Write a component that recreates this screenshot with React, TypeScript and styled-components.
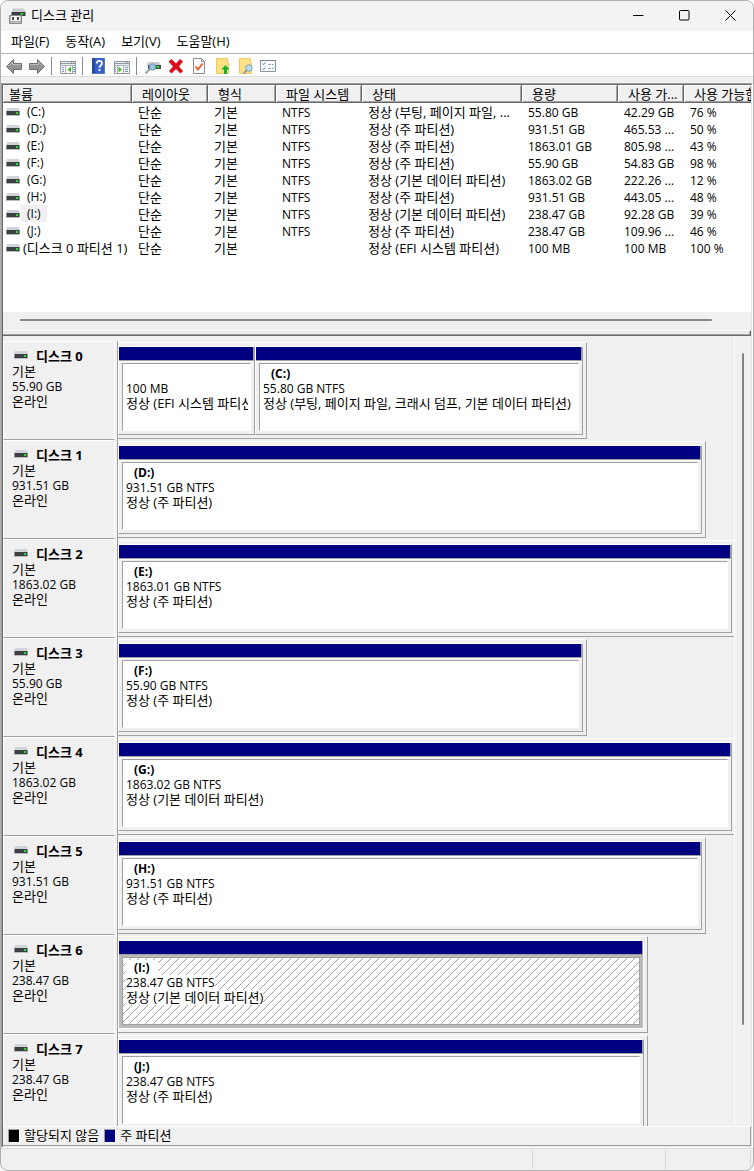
import React from "react";
import styled, { createGlobalStyle, css } from "styled-components";

const GlobalStyle = createGlobalStyle`
  * { box-sizing: border-box; }
  html, body, #root { height: 100%; }
  body {
    margin: 0;
    background: #fafafa;
    color: #000;
    font: 13px/16px "Open Sans", "Noto Sans CJK KR", sans-serif;
  }
`;

const c = {
  face: "#f0f0f0",
  light: "#e3e3e3",
  shadow: "#a0a0a0",
  dark: "#696969",
  navy: "#000080",
};

const Window = styled.div`
  display: flex;
  flex-direction: column;
  height: 100vh;
  border: 1px solid #b0b0b0;
  border-radius: 8px;
  background: ${c.face};
  overflow: hidden;
`;

/* Title bar */

const TitleBar = styled.header`
  display: flex;
  align-items: center;
  height: 30px;
  flex: none;
  padding-left: 8px;
  background: #f3f3f3;
`;

const Title = styled.h1`
  flex: 1;
  margin: 0 0 0 5px;
  padding-bottom: 2px;
  font-size: 13px;
  line-height: 16px;
  font-weight: 400;
`;

const CaptionButton = styled.button`
  display: flex;
  align-items: center;
  justify-content: center;
  width: 46px;
  height: 30px;
  padding: 0 0 2px;
  border: 0;
  background: none;
`;

/* Menu and toolbar */

const MenuBar = styled.nav`
  display: flex;
  flex: none;
  height: 23px;
  padding: 0 2px;
  background: #fff;
  border-bottom: 1px solid #b0b3b9;
`;

const MenuButton = styled.button`
  padding: 0 8px 2px;
  border: 0;
  background: none;
  color: inherit;
  font: inherit;
`;

const ToolBar = styled.div`
  display: flex;
  flex: none;
  height: 23px;
  padding-left: 1px;
  background: #fff;
  border-bottom: 1px solid #dcdcdc;
`;

const ToolButton = styled.button`
  width: 23px;
  height: 22px;
  padding: 2px 3px 1px;
  border: 0;
  background: none;
  svg { display: block; }
`;

const ToolDivider = styled.span`
  width: 8px;
  margin-top: 3px;
  height: 18px;
  background: linear-gradient(#8c8c8c, #8c8c8c) 3px 0 / 1px 100% no-repeat;
`;

/* Sunken client frame */

const Frame = styled.main`
  display: flex;
  flex: 1;
  min-height: 0;
  margin-top: 6px;
  border: 1px solid;
  border-color: ${c.shadow} #fff #fff ${c.shadow};
`;

const FrameInner = styled.div`
  display: flex;
  flex-direction: column;
  flex: 1;
  min-width: 0;
  border: 1px solid;
  border-color: ${c.dark} ${c.light} ${c.light} ${c.dark};
`;

/* Volume list */

const VolumePane = styled.section`
  flex: 0 0 227px;
  overflow: hidden;
  background: #fff;
`;

const VolumeTable = styled.table`
  width: 100%;
  table-layout: fixed;
  border-collapse: separate;
  border-spacing: 0;
`;

const HeadCell = styled.th`
  height: 18px;
  padding: 1px 0 0 10px;
  overflow: hidden;
  white-space: nowrap;
  text-align: left;
  font-weight: 400;
  line-height: 16px;
  background: ${c.face};
  border-right: 1px solid ${c.dark};
  border-bottom: 1px solid ${c.dark};
  box-shadow: inset 1px 1px #fff, inset -1px -1px ${c.shadow};
  &:first-child { padding-left: 6px; }
  &:last-child { border-right: 0; }
`;

const Cell = styled.td<{ $latin?: boolean }>`
  height: 17px;
  padding: ${(p) => (p.$latin ? 2 : 1)}px 0 0 6px;
  overflow: hidden;
  white-space: nowrap;
  line-height: ${(p) => (p.$latin ? 15 : 16)}px;
  font-size: ${(p) => (p.$latin ? 12 : 13)}px;
`;

const NameCell = styled(Cell)`
  padding: 0 0 0 3px;
`;

const VolumeName = styled.div`
  display: flex;
  align-items: center;
  gap: 1px;
  svg { flex: none; }
`;

const VolumeLabel = styled.span<{ $selected?: boolean; $long?: boolean }>`
  padding: 1px ${(p) => (p.$long ? 0 : 6)}px 0 ${(p) => (p.$long ? 2 : 6)}px;
  font-size: ${(p) => (p.$long ? 13 : 12)}px;
  line-height: 16px;
  background: ${(p) => (p.$selected ? c.face : "transparent")};
`;

const HScroll = styled.div`
  flex: none;
  height: 18px;
  padding: 7px 39px 0 17px;
`;

const HThumb = styled.div`
  height: 2px;
  border-radius: 1px;
  background: #858585;
`;

const Splitter = styled.div`
  flex: none;
  height: 6px;
  border-top: 1px solid #fff;
  border-bottom: 1px solid ${c.dark};
  border-right: 1px solid ${c.dark};
  box-shadow: inset 0 1px ${c.light}, inset -1px -1px ${c.shadow};
`;

/* Disk map */

const DiskPane = styled.section`
  display: flex;
  flex: 1;
  min-height: 0;
  overflow: hidden;
`;

const DiskList = styled.div`
  flex: 1;
  min-width: 0;
  padding-top: 5px;
`;

const DiskRow = styled.article`
  display: flex;
  height: 99px;
`;

const DiskInfo = styled.div`
  flex: 0 0 112px;
  margin-right: 2px;
  padding: 7px 0 0 8px;
  border: 1px solid #fff;
  border-bottom-color: ${c.shadow};
  line-height: 15px;
`;

const DiskTitle = styled.h2`
  display: flex;
  align-items: center;
  gap: 8px;
  margin: 0;
  padding-left: 2px;
  font-size: 13px;
  line-height: 15px;
  font-weight: 700;
  svg { margin-top: -3px; }
`;

const Line = styled.div<{ $latin?: boolean }>`
  height: 15px;
  white-space: nowrap;
  font-size: ${(p) => (p.$latin ? 12 : 13)}px;
  line-height: 15px;
`;

const DiskTrack = styled.div`
  display: flex;
  flex: 1;
  min-width: 0;
  padding: 1px 0;
  border-left: 1px solid ${c.shadow};
`;

/* A box's own padding and border (4px) is laid out before the shares are dealt. */
const DiskBox = styled.div<{ $size: number; $full: boolean }>`
  display: flex;
  flex: ${(p) => p.$size - 4} 1 0;
  min-width: 0;
  padding: 3px ${(p) => (p.$full ? 2 : 3)}px 3px 0;
  border-top: 1px solid #fff;
  border-right: ${(p) => (p.$full ? 0 : 1)}px solid ${c.shadow};
  border-bottom: 1px solid ${c.shadow};
`;

const TrackRest = styled.div<{ $size: number }>`
  flex: ${(p) => p.$size} 1 0;
`;

const PartitionBox = styled.div<{ $size: number; $selected?: boolean }>`
  display: flex;
  flex-direction: column;
  flex: ${(p) => p.$size} 1 0;
  min-width: 0;
  border: 1px solid #fff;
  ${(p) =>
    !p.$selected &&
    css`
      border-right-color: ${c.shadow};
      border-bottom-color: ${c.shadow};
    `}
`;

const PartitionBar = styled.div`
  flex: 0 0 14px;
  background: ${c.navy};
  border-right: 1px solid ${c.shadow};
  border-bottom: 1px solid ${c.shadow};
`;

const PartitionBody = styled.div<{ $selected?: boolean }>`
  display: flex;
  flex: 1;
  min-height: 0;
  padding: 1px 3px 3px;
  border-top: 1px solid ${(p) => (p.$selected ? "#bababa" : "#fff")};
  background: ${(p) => (p.$selected ? "#bababa" : c.face)};
`;

const PartitionFace = styled.div<{ $selected?: boolean }>`
  position: relative;
  flex: 1;
  min-width: 0;
  padding: 2px 2px 0 3px;
  overflow: hidden;
  background: #fff;
  border: 1px solid ${(p) => (p.$selected ? c.shadow : "#fff")};
  border-top-color: ${c.shadow};
  border-left-color: ${c.shadow};
`;

const PartitionText = styled.div`
  position: relative;
  overflow: hidden;
  span { display: inline-block; height: 15px; background: #fff; }
  strong { display: inline-block; min-height: 15px; padding: 0 8px; background: #fff; }
`;

const Hatch = styled.svg`
  position: absolute;
  inset: 0;
  width: 100%;
  height: 100%;
`;

const VScroll = styled.div`
  flex: 0 0 17px;
  padding: 17px 0 101px 7px;
  border-left: 1px solid #fff;
`;

const VThumb = styled.div`
  width: 2px;
  height: 100%;
  border-radius: 1px;
  background: #858585;
`;

/* Legend and status bar */

const Legend = styled.footer`
  display: flex;
  flex: none;
  align-items: center;
  gap: 4px;
  height: 20px;
  padding-left: 5px;
  border-top: 1px solid #fff;
  border-right: 1px solid ${c.shadow};
  border-bottom: 1px solid ${c.shadow};
`;

const LegendLabel = styled.span`
  padding: 0 1px 2px 0;
`;

const Swatch = styled.span<{ $color: string }>`
  width: 12px;
  height: 14px;
  background: ${(p) => p.$color};
  border: 1px solid;
  border-color: ${c.shadow} #fff #fff ${c.shadow};
`;

const StatusBar = styled.div`
  display: flex;
  flex: none;
  height: 22px;
  padding: 1px 2px 1px 0;
  border-top: 1px solid #d7d7d7;
`;

const StatusPart = styled.div<{ $width?: number }>`
  flex: ${(p) => (p.$width ? `0 0 ${p.$width}px` : "1")};
  border-right: 1px solid #d7d7d7;
`;

/* Icons */

const DriveIcon = () => (
  <svg width="14" height="8" viewBox="0 0 14 8" aria-hidden="true">
    <path d="M1 0h12l1 3.500H0z" fill="#cfd4d8" />
    <path d="M0 3h14v4H0z" fill="#3d4043" />
    <path d="M0 7h14v1H0z" fill="#b9bdc1" />
    <path d="M0 3h1v4H0zM13 3h1v4h-1z" fill="#8b9094" />
    <path d="M9.500 4h3v2h-3z" fill="#1f7a2a" />
    <circle cx="11" cy="5" r="1" fill="#43f04c" />
  </svg>
);

const AppIcon = () => (
  <svg width="17" height="16" viewBox="0 0 17 16" aria-hidden="true">
    <path d="M4 0.500h11l1.500 3.500H2.500z" fill="#c9ced2" />
    <path d="M2.500 4H16.500v4H2.500z" fill="#3d4043" />
    <path d="M11 5h4v2h-4z" fill="#168a20" />
    <circle cx="13" cy="6" r="1" fill="#35e63d" />
    <path d="M0.500 7.500h12v8h-12z" fill="#c4c6c8" stroke="#85888b" />
    <path d="M2 8h9v5H2z" fill="#f6f6f6" />
    <path d="M3 9h2v3H3zM8 9h2v3H8z" fill="#4a4a4a" />
    <path d="M1 13.500h11" stroke="#a4a7aa" />
  </svg>
);

const Svg = ({ children }: { children: React.ReactNode }) => (
  <svg width="17" height="17" viewBox="0 0 17 17" fill="none" aria-hidden="true">
    {children}
  </svg>
);

const arrow = "M1.500 9.500 8.500 2.500v4H16.500v6H8.500v4z";

const BackIcon = () => (
  <Svg>
    <path d={arrow} fill="#939393" stroke="#707070" strokeLinejoin="round" />
    <path d="M3.500 9 7.500 5v2.500h8" stroke="#b9b9b9" />
  </Svg>
);

const ForwardIcon = () => (
  <Svg>
    <g transform="matrix(-1 0 0 1 18 0)">
      <path d={arrow} fill="#939393" stroke="#707070" strokeLinejoin="round" />
      <path d="M3.500 9 7.500 5v2.500h8" stroke="#b9b9b9" />
    </g>
  </Svg>
);

const TreeIcon = () => (
  <Svg>
    <path d="M1.500 4.500h15v12h-15z" fill="#fff" stroke="#9299a1" />
    <path d="M1 4h16v4H1z" fill="#9299a1" />
    <path d="M2 5.500h10M13 5.500h1M15 5.500h1M2 7.500h14" stroke="#e8ecf0" />
    <path d="M1 8.500h16M6.500 8v8M13.500 8v8" stroke="#a9b2bb" />
    <path d="M3 10.500h2M3 12.500h2M3 14.500h2M14 10.500h2M14 12.500h2M14 14.500h2" stroke="#6b93bf" />
    <path d="M12 9.500v6L8.500 12.500z" fill="#45b52c" />
  </Svg>
);

const HelpIcon = () => (
  <Svg>
    <path d="M2 1h13v16H2z" fill="#3763c9" />
    <path d="M2 1h3v16H2z" fill="#24489c" />
    <path d="M14.500 1v16M2 16.500h13" stroke="#5478c8" />
    <path
      d="M6.800 6.500C6.800 3 12 3.100 12 6.200c0 2-2.500 2.300-2.500 4.500M9.500 12v2"
      stroke="#fff"
      strokeWidth="1.800"
    />
  </Svg>
);

const ActionPaneIcon = () => (
  <Svg>
    <path d="M1.500 4.500h15v12h-15z" fill="#fff" stroke="#9299a1" />
    <path d="M1 4h16v4H1z" fill="#9299a1" />
    <path d="M2 5.500h10M13 5.500h1M15 5.500h1M2 7.500h14" stroke="#e8ecf0" />
    <path d="M1 8.500h16M10.500 8v8M4.500 8v8" stroke="#a9b2bb" />
    <path d="M12 10.500h3M12 12.500h3M12 14.500h3M2 10.500h1M2 12.500h1M2 14.500h1" stroke="#6b93bf" />
    <path d="M5.500 9.500v6L9 12.500z" fill="#45b52c" />
  </Svg>
);

const RescanIcon = () => (
  <Svg>
    <path d="M4 5h11l1.500 3H2.500z" fill="#c9ced2" />
    <path d="M4 8h13v4H4z" fill="#44484c" />
    <path d="M12 9h4v2h-4z" fill="#168a20" />
    <circle cx="14" cy="10" r="1" fill="#3df046" />
    <path d="M6 12 1.500 16.500" stroke="#9aa1a8" strokeWidth="2" />
    <circle cx="8.500" cy="10" r="3.200" fill="#9cc4e4" stroke="#7297b5" />
  </Svg>
);

const DeleteIcon = () => (
  <Svg>
    <path
      d="m1.500 4.500 3-2.500 4.500 4.500L13 2l3 2.500L12 9.500l4 4.500-2.500 2.500L9 12l-4.500 4.500L2 14l4-4.500z"
      fill="#d90f1c"
    />
  </Svg>
);

const PropertiesIcon = () => (
  <Svg>
    <path d="M3.500 1.500h8l3 3v12h-11z" fill="#fafafa" stroke="#8b8b8b" />
    <path d="M11.500 1.500v3h3" stroke="#8b8b8b" />
    <path d="m5.500 9.500 2.500 3 4.500-6" stroke="#ee5a24" strokeWidth="1.800" />
  </Svg>
);

const FolderUpIcon = () => (
  <Svg>
    <path d="M3.500 1.500h11v3l1 1v11h-12z" fill="#fde184" stroke="#ecc862" />
    <path d="M12.500 8 16.500 12.500H14v4.500h-3v-4.500H8.500z" fill="#1fae2b" />
  </Svg>
);

const FolderSearchIcon = () => (
  <Svg>
    <path d="M3.500 1.500h11v3l1 1v11h-12z" fill="#fde184" stroke="#ecc862" />
    <path d="M11 13 7.500 16.500" stroke="#96a0aa" strokeWidth="2" />
    <circle cx="13" cy="11" r="3.200" fill="#b6dcf5" stroke="#86a2ba" />
  </Svg>
);

const OptionsIcon = () => (
  <Svg>
    <path d="M1.500 3.500h15v11h-15z" fill="#fafcfe" stroke="#8994a0" />
    <path d="M1 3.500h16" stroke="#7b8692" />
    <path d="m3.500 6.500 1 1.200L6.500 5.500M3.500 11.500l1 1.200 2-2.200" stroke="#3c82cc" />
    <path d="M9 7.500h3M13 7.500h2M9 11.500h3M13 11.500h2" stroke="#9aa6b2" />
  </Svg>
);

/* Data */

const columns = [
  { label: "볼륨", width: 129 },
  { label: "레이아웃", width: 76 },
  { label: "형식", width: 68 },
  { label: "파일 시스템", width: 86 },
  { label: "상태", width: 160 },
  { label: "용량", width: 96 },
  { label: "사용 가...", width: 66 },
  { label: "사용 가능한 공간" },
];

const volumes = [
  ["(C:)", "NTFS", "정상 (부팅, 페이지 파일, ...", "55.80 GB", "42.29 GB", "76 %"],
  ["(D:)", "NTFS", "정상 (주 파티션)", "931.51 GB", "465.53 ...", "50 %"],
  ["(E:)", "NTFS", "정상 (주 파티션)", "1863.01 GB", "805.98 ...", "43 %"],
  ["(F:)", "NTFS", "정상 (주 파티션)", "55.90 GB", "54.83 GB", "98 %"],
  ["(G:)", "NTFS", "정상 (기본 데이터 파티션)", "1863.02 GB", "222.26 ...", "12 %"],
  ["(H:)", "NTFS", "정상 (주 파티션)", "931.51 GB", "443.05 ...", "48 %"],
  ["(I:)", "NTFS", "정상 (기본 데이터 파티션)", "238.47 GB", "92.28 GB", "39 %"],
  ["(J:)", "NTFS", "정상 (주 파티션)", "238.47 GB", "109.96 ...", "46 %"],
  ["(디스크 0 파티션 1)", "", "정상 (EFI 시스템 파티션)", "100 MB", "100 MB", "100 %"],
];

const selectedVolume = "(I:)";

type Partition = { name: string; size: string; status: string; share: number };
type Disk = { size: string; span: number; partitions: Partition[] };

const trackSpan = 616;

const single = (size: string, span: number, name: string, detail: string, status: string): Disk => ({
  size,
  span,
  partitions: [{ name, size: detail, status, share: 1 }],
});

const disks: Disk[] = [
  {
    size: "55.90 GB",
    span: 469,
    partitions: [
      { name: "", size: "100 MB", status: "정상 (EFI 시스템 파티션)", share: 135 },
      {
        name: "(C:)",
        size: "55.80 GB NTFS",
        status: "정상 (부팅, 페이지 파일, 크래시 덤프, 기본 데이터 파티션)",
        share: 326,
      },
    ],
  },
  single("931.51 GB", 588, "(D:)", "931.51 GB NTFS", "정상 (주 파티션)"),
  single("1863.02 GB", 616, "(E:)", "1863.01 GB NTFS", "정상 (주 파티션)"),
  single("55.90 GB", 469, "(F:)", "55.90 GB NTFS", "정상 (주 파티션)"),
  single("1863.02 GB", 616, "(G:)", "1863.02 GB NTFS", "정상 (기본 데이터 파티션)"),
  single("931.51 GB", 588, "(H:)", "931.51 GB NTFS", "정상 (주 파티션)"),
  single("238.47 GB", 530, "(I:)", "238.47 GB NTFS", "정상 (기본 데이터 파티션)"),
  single("238.47 GB", 530, "(J:)", "238.47 GB NTFS", "정상 (주 파티션)"),
];

const tools = [
  [
    { label: "뒤로", Icon: BackIcon },
    { label: "앞으로", Icon: ForwardIcon },
  ],
  [{ label: "콘솔 트리", Icon: TreeIcon }],
  [
    { label: "도움말", Icon: HelpIcon },
    { label: "작업 창", Icon: ActionPaneIcon },
  ],
  [
    { label: "다시 검사", Icon: RescanIcon },
    { label: "삭제", Icon: DeleteIcon },
    { label: "속성", Icon: PropertiesIcon },
    { label: "열기", Icon: FolderUpIcon },
    { label: "탐색", Icon: FolderSearchIcon },
    { label: "옵션", Icon: OptionsIcon },
  ],
];

function PartitionView({ partition }: { partition: Partition }) {
  const selected = partition.name === selectedVolume;
  return (
    <PartitionBox $size={partition.share} $selected={selected}>
      <PartitionBar />
      <PartitionBody $selected={selected}>
        <PartitionFace $selected={selected}>
          {selected && (
            <Hatch aria-hidden="true">
              <defs>
                <pattern id="hatch" width="8" height="8" patternUnits="userSpaceOnUse">
                  <path
                    d="M7 0h1v1h-1zM6 1h1v1h-1zM5 2h1v1h-1zM4 3h1v1h-1zM3 4h1v1h-1zM2 5h1v1h-1zM1 6h1v1h-1zM0 7h1v1h-1z"
                    fill={c.shadow}
                    shapeRendering="crispEdges"
                  />
                </pattern>
              </defs>
              <rect width="100%" height="100%" fill="url(#hatch)" />
            </Hatch>
          )}
          <PartitionText>
            <Line $latin>{partition.name && <strong>{partition.name}</strong>}</Line>
            <Line $latin>
              <span>{partition.size}</span>
            </Line>
            <Line>
              <span>{partition.status}</span>
            </Line>
          </PartitionText>
        </PartitionFace>
      </PartitionBody>
    </PartitionBox>
  );
}

export default function App() {
  return (
    <>
      <GlobalStyle />
      <Window>
        <TitleBar>
          <AppIcon />
          <Title>디스크 관리</Title>
          <CaptionButton aria-label="최소화">
            <svg width="11" height="11" viewBox="0 0 11 11">
              <path d="M0 5.500h10.500" stroke="#000" />
            </svg>
          </CaptionButton>
          <CaptionButton aria-label="최대화">
            <svg width="11" height="11" viewBox="0 0 11 11">
              <rect x="0.500" y="0.500" width="9.500" height="9.500" rx="1" fill="none" stroke="#000" />
            </svg>
          </CaptionButton>
          <CaptionButton aria-label="닫기">
            <svg width="11" height="11" viewBox="0 0 11 11">
              <path d="m0.500 0.500 10 10m0-10-10 10" stroke="#000" />
            </svg>
          </CaptionButton>
        </TitleBar>

        <MenuBar>
          {["파일(F)", "동작(A)", "보기(V)", "도움말(H)"].map((m) => (
            <MenuButton key={m}>{m}</MenuButton>
          ))}
        </MenuBar>

        <ToolBar role="toolbar">
          {tools.map((group, i) => (
            <React.Fragment key={i}>
              {i > 0 && <ToolDivider />}
              {group.map(({ label, Icon }) => (
                <ToolButton key={label} aria-label={label}>
                  <Icon />
                </ToolButton>
              ))}
            </React.Fragment>
          ))}
        </ToolBar>

        <Frame>
          <FrameInner>
            <VolumePane>
              <VolumeTable>
                <colgroup>
                  {columns.map((col) => (
                    <col key={col.label} width={col.width} />
                  ))}
                </colgroup>
                <thead>
                  <tr>
                    {columns.map((col) => (
                      <HeadCell key={col.label} scope="col">
                        {col.label}
                      </HeadCell>
                    ))}
                  </tr>
                </thead>
                <tbody>
                  {volumes.map(([name, fs, status, size, free, percent]) => (
                    <tr key={name}>
                      <NameCell>
                        <VolumeName>
                          <DriveIcon />
                          <VolumeLabel $selected={name === selectedVolume} $long={name.length > 4}>
                            {name}
                          </VolumeLabel>
                        </VolumeName>
                      </NameCell>
                      <Cell>단순</Cell>
                      <Cell>기본</Cell>
                      <Cell $latin>{fs}</Cell>
                      <Cell>{status}</Cell>
                      <Cell $latin>{size}</Cell>
                      <Cell $latin>{free}</Cell>
                      <Cell $latin>{percent}</Cell>
                    </tr>
                  ))}
                </tbody>
              </VolumeTable>
            </VolumePane>
            <HScroll aria-hidden="true">
              <HThumb />
            </HScroll>
            <Splitter />

            <DiskPane>
              <DiskList>
                {disks.map((disk, i) => (
                  <DiskRow key={i}>
                    <DiskInfo>
                      <DiskTitle>
                        <DriveIcon />
                        {`디스크 ${i}`}
                      </DiskTitle>
                      <Line>기본</Line>
                      <Line $latin>{disk.size}</Line>
                      <Line>온라인</Line>
                    </DiskInfo>
                    <DiskTrack>
                      <DiskBox $size={disk.span} $full={disk.span === trackSpan}>
                        {disk.partitions.map((p) => (
                          <PartitionView key={p.status} partition={p} />
                        ))}
                      </DiskBox>
                      {disk.span < trackSpan && <TrackRest $size={trackSpan - disk.span} />}
                    </DiskTrack>
                  </DiskRow>
                ))}
              </DiskList>
              <VScroll aria-hidden="true">
                <VThumb />
              </VScroll>
            </DiskPane>

            <Legend>
              <Swatch $color="#000" />
              <LegendLabel>할당되지 않음</LegendLabel>
              <Swatch $color={c.navy} />
              <LegendLabel>주 파티션</LegendLabel>
            </Legend>
          </FrameInner>
        </Frame>

        <StatusBar>
          <StatusPart />
          <StatusPart $width={133} />
          <StatusPart $width={85} />
        </StatusBar>
      </Window>
    </>
  );
}
